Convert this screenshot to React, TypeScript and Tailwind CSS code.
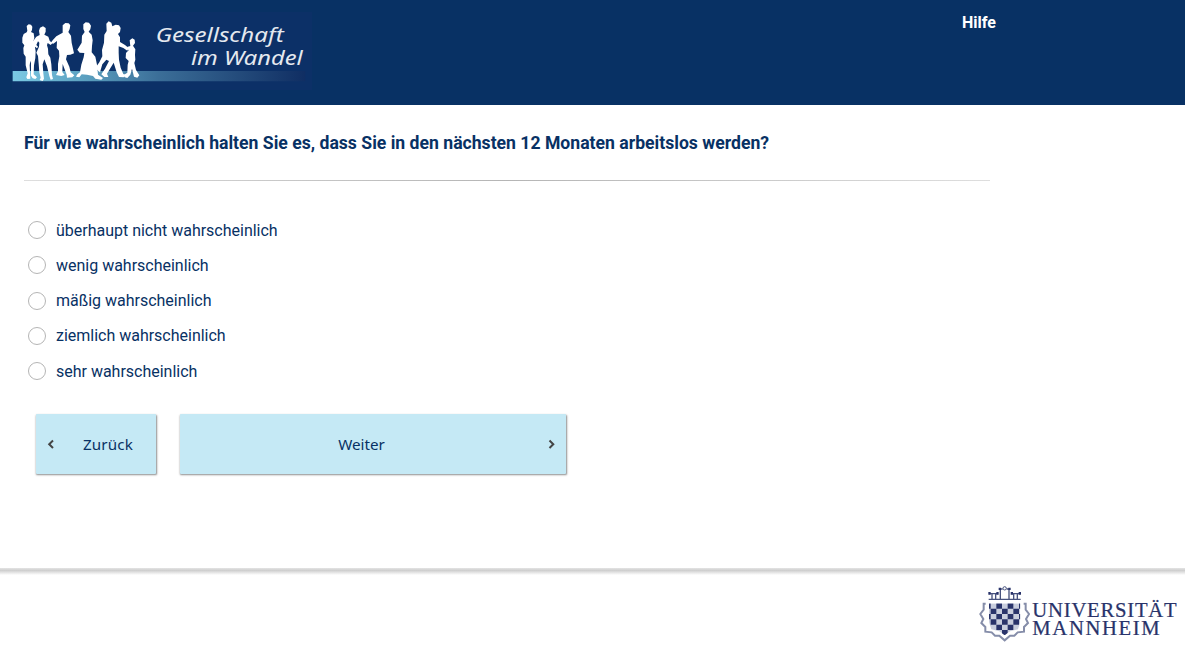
const people = [
  "M80 48 L86 43 L93 44 L97 50 L96 60 L93 66 L101 70 L103 84 L100 94 L106 99 L105 112 L107 124 L106 144 L102 166 L101 193 L111 202 L106 207 L98 205 L93 197 L93 160 L91 152 L89 166 L91 206 L82 207 L79 202 L83 190 L77 166 L77 140 L71 131 L70 114 L73 106 L67 98 L67 83 L71 72 L80 67 L82 62 Z",
  "M117 62 L120 53 L129 49 L137 54 L137 65 L133 74 L145 80 L149 92 L157 100 L152 105 L143 99 L141 106 L144 116 L145 133 L151 143 L154 163 L156 195 L159 207 L152 209 L148 198 L141 169 L133 148 L128 163 L130 190 L132 206 L128 213 L119 210 L122 203 L118 187 L116 161 L114 138 L109 128 L117 110 L118 98 L114 94 L109 105 L114 110 L111 115 L101 107 L99 94 L109 80 L119 75 Z",
  "M188 46 L196 39 L206 40 L211 46 L209 57 L205 66 L213 77 L215 98 L222 130 L211 134 L201 135 L198 148 L208 170 L212 187 L223 196 L217 202 L201 203 L200 194 L188 162 L187 186 L194 195 L184 198 L168 195 L174 184 L174 162 L178 139 L177 122 L170 114 L171 93 L160 101 L152 99 L158 91 L169 79 L188 68 Z",
  "M250 43 L257 37 L267 38 L273 47 L271 58 L266 65 L275 74 L278 91 L276 108 L275 127 L286 140 L291 164 L294 194 L309 204 L304 209 L286 206 L279 198 L261 194 L245 193 L238 202 L228 200 L232 193 L240 187 L244 164 L251 142 L253 129 L239 128 L232 119 L245 98 L246 77 L254 66 L250 57 Z",
  "M319 41 L326 34 L334 38 L337 49 L347 44 L357 46 L362 54 L360 66 L354 72 L360 82 L360 96 L375 105 L386 114 L382 122 L370 114 L356 109 L356 128 L357 149 L362 173 L370 192 L378 196 L371 202 L357 201 L350 187 L341 158 L330 176 L321 191 L325 201 L313 201 L304 193 L315 176 L327 153 L319 149 L307 163 L300 187 L292 181 L288 171 L298 157 L307 139 L306 120 L312 98 L313 74 L320 63 Z",
  "M389 91 L397 85 L404 89 L405 99 L399 107 L406 118 L405 135 L406 149 L403 159 L408 180 L418 196 L412 203 L402 200 L396 176 L391 194 L382 204 L374 202 L371 195 L382 188 L383 164 L386 153 L377 144 L378 129 L386 121 L380 115 L383 110 L391 108 Z",
];

function StudyLogo() {
  return (
    <svg width="312" height="80" viewBox="0 0 936 240" role="img" aria-label="Gesellschaft im Wandel">
      <defs>
        <linearGradient id="stripe">
          <stop offset="0" stopColor="#7bc9e4" />
          <stop offset=".25" stopColor="#5b9fbf" />
          <stop offset=".5" stopColor="#3b6e98" />
          <stop offset="1" stopColor="#102e63" />
        </linearGradient>
      </defs>
      <path d="M36 6H936V240H36Z" fill="#0c3067" />
      <path d="M38 183H916V214H38Z" fill="url(#stripe)" />
      <g fill="#fff">{people.map((d) => <path key={d} d={d} />)}</g>
      <g fill="#e5e9ef" fontFamily="'Noto Sans', sans-serif" fontStyle="italic" fontSize="61">
        <text x="467" y="95" textLength="384" lengthAdjust="spacingAndGlyphs">Gesellschaft</text>
        <text x="573" y="164" textLength="335" lengthAdjust="spacingAndGlyphs">im Wandel</text>
      </g>
    </svg>
  );
}

const cells: [number, number][] = [
  [79, 70], [113, 70],
  [62, 86], [96, 86], [130, 86],
  [79, 102], [113, 102],
  [62, 118], [96, 118], [130, 118],
  [79, 134], [113, 134],
  [96, 150],
  [45, 70], [147, 70], [45, 102], [147, 102],
];

function UniversityLogo() {
  return (
    <svg width="215" height="71" viewBox="0 0 645 213" role="img" aria-label="Universität Mannheim">
      <defs>
        <clipPath id="shield"><path d="M57 70H151V126L144 148L120 154L104 166L88 154L64 148L57 126Z" /></clipPath>
      </defs>
      <g clipPath="url(#shield)">
        <path d="M57 70H151V170H57Z" fill="#c9cedd" />
        {cells.map(([x, y]) => <path key={`${x}-${y}`} d={`M${x} ${y}h17v16h-17Z`} fill="#29336a" />)}
      </g>
      <path d="M47 71H41V89L31 102L40 117L34 129L46 141V155L65 157L75 167H88L104 181L120 167H133L143 157L162 155V141L174 129L168 117L177 102L167 89V71H161" fill="none" stroke="#858da9" strokeWidth="6" />
      <g fill="none" stroke="#48537e" strokeWidth="4">
        <path d="M56 58H152M66 57V41M77 57V41M58 41H84M91 58V27H98M117 58V27H110M131 57V41M142 57V41M124 41H150" />
        <circle cx="104" cy="25" r="5" strokeWidth="3" />
      </g>
      <path d="M55 36h7v8h-7ZM79 36h7v8h-7ZM86 23h7v7h-7ZM115 23h7v7h-7ZM122 36h7v8h-7ZM146 36h7v8h-7Z" fill="#29336a" />
      <g fill="#29336a" stroke="#29336a" strokeWidth="0.7" fontFamily="'Liberation Serif', serif" fontSize="62">
        <text x="187" y="111" textLength="433">UNIVERSITÄT</text>
        <text x="187" y="165" textLength="382">MANNHEIM</text>
      </g>
    </svg>
  );
}

const answers = [
  "überhaupt nicht wahrscheinlich",
  "wenig wahrscheinlich",
  "mäßig wahrscheinlich",
  "ziemlich wahrscheinlich",
  "sehr wahrscheinlich",
];

function Chevron({ back = false }: { back?: boolean }) {
  return (
    <svg width="8" height="10" viewBox="0 0 8 10" className="mt-px shrink-0" aria-hidden="true">
      <path d={back ? "M6 1.5L2.2 5.2L6 9" : "M1.5 1.5L5.3 5.2L1.5 9"} fill="none" stroke="#444" strokeWidth="2" />
    </svg>
  );
}

export default function App() {
  return (
    <div className="flex h-[651px] flex-col overflow-hidden bg-white font-['Roboto',sans-serif] text-[#083164]">
      <header className="flex h-[105px] shrink-0 items-start bg-[#083164] pt-[10px]">
        <StudyLogo />
        <a href="#hilfe" className="mt-px ml-[650px] text-base leading-6 font-bold text-white">Hilfe</a>
      </header>
      <main className="flex h-[463px] shrink-0 flex-col pl-6">
        <h1 className="mt-[25px] text-[17.61px] leading-[26px] font-bold">
          Für wie wahrscheinlich halten Sie es, dass Sie in den nächsten 12 Monaten arbeitslos werden?
        </h1>
        <hr className="mt-6 h-px w-[966px] shrink-0 border-0 bg-linear-to-r from-[#dedede] via-[#b5b5b5] to-[#dedede]" />
        <div className="mt-[31.4px] flex flex-col pl-1" role="radiogroup">
          {answers.map((answer) => (
            <label key={answer} className="flex h-[35.25px] items-center gap-[10px] text-base">
              <input type="radio" name="answer" className="size-[18px] appearance-none rounded-full border border-[#b5b5b5] bg-white checked:border-[#083164] checked:bg-[#083164]" />
              <span className="pt-[1.3px] tracking-[-0.01px]">{answer}</span>
            </label>
          ))}
        </div>
        <div className="mt-[25.35px] flex gap-6 pl-3 font-['Noto_Sans',sans-serif] text-[15.2px]">
          <button className="flex h-[60px] w-[120px] items-center rounded-[1px] bg-[#c5e9f5] pl-[11px] shadow-[0.5px_1px_2px_rgba(0,0,0,0.45)]">
            <Chevron back />
            <span className="ml-[28px] tracking-[0.15px]">Zurück</span>
          </button>
          <button className="flex h-[60px] w-[386px] items-center rounded-[1px] bg-[#c5e9f5] pr-[10px] shadow-[0.5px_1px_2px_rgba(0,0,0,0.45)]">
            <span className="grow pr-[5px] text-center">Weiter</span>
            <Chevron />
          </button>
        </div>
      </main>
      <footer className="flex grow flex-col">
        <div className="h-[7px] shrink-0 bg-linear-to-b from-[#e4e4e4] via-[#cfcfcf] via-35% to-white" />
        <div className="flex justify-end pt-[5px]">
          <UniversityLogo />
        </div>
      </footer>
    </div>
  );
}
